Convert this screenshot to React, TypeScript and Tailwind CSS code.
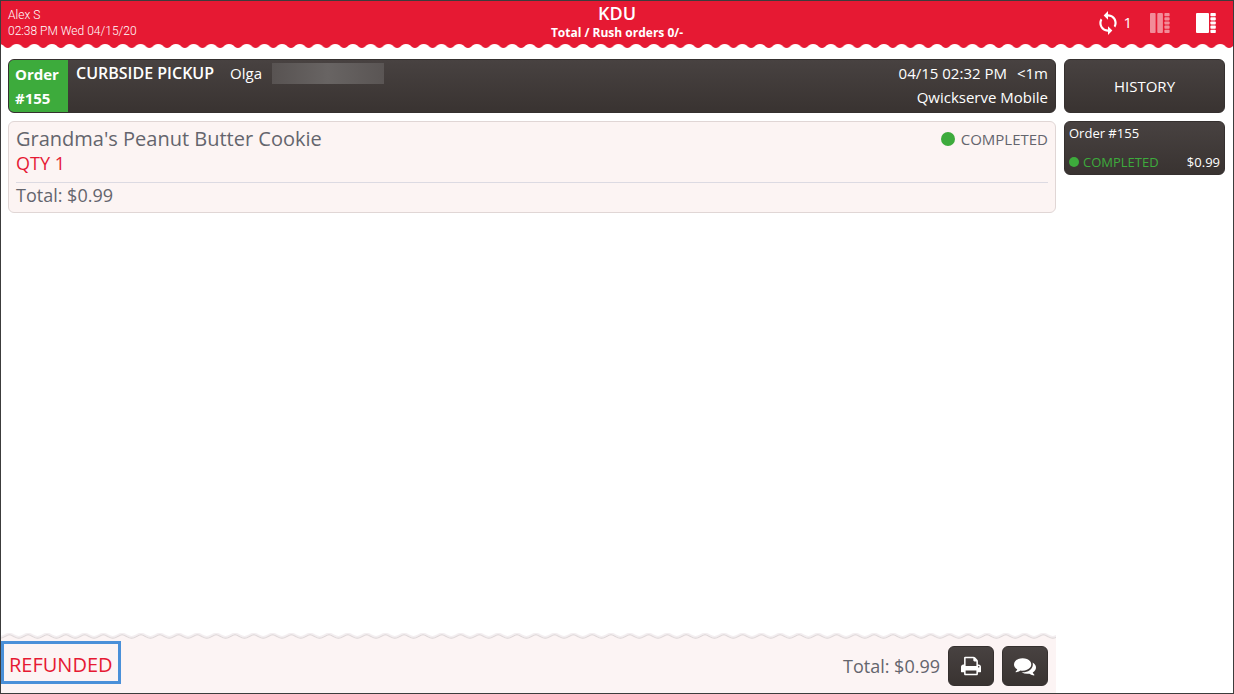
import type { ReactNode } from "react";
import { MdSync } from "react-icons/md";

const items = [{ name: "Grandma's Peanut Butter Cookie", qty: 1, status: "COMPLETED" }];

const history = [{ id: 155, status: "COMPLETED", total: "$0.99" }];

const darkPanel =
  "rounded-md border border-[#35302f] bg-linear-to-b from-[#484241] to-[#393331] text-white";

const ColumnsIcon = () => (
  <svg viewBox="0 0 20 20" className="size-5" fill="currentColor" aria-hidden="true">
    <rect width="5.600" height="20" rx="1" />
    <rect x="7.300" width="5.600" height="20" rx="1" />
    {[0, 4.2, 8.4, 12.6, 16.8].map((y) => (
      <rect key={y} x="14.400" y={y} width="5.200" height="3.200" rx="0.800" />
    ))}
  </svg>
);

const SidebarIcon = () => (
  <svg viewBox="0 0 20 20" className="size-5" fill="currentColor" aria-hidden="true">
    <rect width="13" height="20" rx="1" />
    {[0, 4.2, 8.4, 12.6, 16.8].map((y) => (
      <rect key={y} x="14.400" y={y} width="5.400" height="3.200" rx="0.800" />
    ))}
  </svg>
);

const PrintIcon = () => (
  <svg viewBox="0 0 1664 1792" className="h-[22px] w-5" fill="currentColor" aria-hidden="true">
    <path d="M384 1536h896v-256h-896v256zM384 896h896v-384h-160q-40 0-68-28t-28-68v-160h-640v640zM1536 960q0-26-19-45t-45-19-45 19-19 45 19 45 45 19 45-19 19-45zM1664 960v416q0 13-9.500 22.500t-22.500 9.500h-224v160q0 40-28 68t-68 28h-960q-40 0-68-28t-28-68v-160h-224q-13 0-22.500-9.500t-9.500-22.500v-416q0-79 56.500-135.500t135.500-56.500h64v-544q0-40 28-68t68-28h672q40 0 88 20t76 48l152 152q28 28 48 76t20 88v256h64q79 0 135.500 56.500t56.500 135.500z" />
  </svg>
);

const CommentsIcon = () => (
  <svg viewBox="0 0 1792 1792" className="size-[22px]" fill="currentColor" aria-hidden="true">
    <path d="M1408 768q0 139-94 257t-256.500 186.500-353.500 68.500q-86 0-176-16-124 88-278 128-36 9-86 16h-3q-11 0-20.500-8t-11.500-21q-1-3-1-6.500t0.500-6.500 2-6l2.500-5t3.500-5.500 4-5 4.500-5 4-4.500q5-6 23-25t26-29.500 22.500-29 25-38.500 20.500-44q-124-72-195-177t-71-224q0-139 94-257t256.500-186.500 353.500-68.500 353.500 68.500 256.500 186.500 94 257zM1792 1024q0 120-71 224.500t-195 176.500q10 24 20.500 44t25 38.500 22.500 29 26 29.500 23 25q1 1 4 4.500t4.500 5 4 5 3.500 5.500l2.500 5t2 6 0.500 6.500-1 6.500q-3 14-13 22t-22 7q-50-7-86-16-154-40-278-128-90 16-176 16-271 0-472-132 58 4 88 4 161 0 309-45t264-129q125-92 192-212t67-254q0-77-23-152 129 71 204 178t75 230z" />
  </svg>
);

// Torn paper edge under the header
const HeaderEdge = () => (
  <svg className="block h-1 w-full" aria-hidden="true">
    <defs>
      <pattern id="header-edge" x="6.800" width="17.700" height="4" patternUnits="userSpaceOnUse">
        <path fill="#e61933" d="M0 0H17.700V4C15.500 4 15 3 13 1.300Q8.850 -1.300 4.700 1.300C2.700 3 2.200 4 0 4Z" />
      </pattern>
    </defs>
    <rect width="100%" height="4" fill="url(#header-edge)" />
  </svg>
);

const FooterEdge = () => (
  <svg className="block h-2 w-full" aria-hidden="true">
    <defs>
      <pattern id="footer-edge" x="8.400" width="18.800" height="8" patternUnits="userSpaceOnUse">
        <path fill="#fcf4f4" d="M0 2C2.500 2 6 5.500 9.400 5.500S16.300 2 18.800 2V8H0Z" />
        <path fill="none" stroke="#f3eef0" strokeWidth="2" d="M0 .5C2.500 .5 6 4 9.400 4S16.300 .5 18.800 .5" />
        <path fill="none" stroke="#d9d1d2" strokeWidth="1" d="M0 1.800C2.500 1.800 6 5.300 9.400 5.300S16.300 1.800 18.800 1.800" />
      </pattern>
    </defs>
    <rect width="100%" height="8" fill="url(#footer-edge)" />
  </svg>
);

const ActionButton = ({ label, children }: { label: string; children: ReactNode }) => (
  <button
    type="button"
    aria-label={label}
    className={`flex h-10 w-[46px] items-center justify-center ${darkPanel}`}
  >
    {children}
  </button>
);

const Header = () => (
  <header>
    <div className="grid h-[43px] grid-cols-[1fr_auto_1fr] bg-[#e61933] text-white">
      <div className="pt-1.5 pl-[7px] font-['Roboto',sans-serif] text-xs leading-4 font-light">
        <p>Alex S</p>
        <p>02:38 PM Wed 04/15/20</p>
      </div>
      <div className="text-center">
        <h1 className="text-lg leading-6 font-semibold">KDU</h1>
        <p className="text-xs leading-4 font-bold">Total / Rush orders 0/-</p>
      </div>
      <div className="flex items-center justify-end pr-[17px]">
        <button type="button" aria-label="Sync" className="mr-[18px] flex items-center gap-0.5 text-[15px]">
          <MdSync className="size-[26px]" aria-hidden="true" />
          <span>1</span>
        </button>
        <button type="button" aria-label="Column view" className="mr-[26px] opacity-50">
          <ColumnsIcon />
        </button>
        <button type="button" aria-label="Sidebar view">
          <SidebarIcon />
        </button>
      </div>
    </div>
    <HeaderEdge />
  </header>
);

const OrderBar = () => (
  <div className={`flex h-[54px] overflow-hidden text-[15px] leading-6 ${darkPanel}`}>
    <div className="-my-px -ml-px w-[60px] bg-[#3dab3c] pt-[3px] pl-[7px] font-bold">
      Order
      <br />
      #155
    </div>
    <div className="flex grow justify-between pt-px pr-[7px] pl-2">
      <div className="flex h-6 items-center">
        <span className="text-base font-semibold">CURBSIDE PICKUP</span>
        <span className="ml-4">Olga</span>
        <span className="ml-2.5 h-[21px] w-28 bg-linear-to-r from-[#585352] via-[#686463] to-[#5a5554]" />
      </div>
      <div className="text-right">
        <p>
          04/15 02:32 PM<span className="ml-2.5">&lt;1m</span>
        </p>
        <p>Qwickserve Mobile</p>
      </div>
    </div>
  </div>
);

const App = () => (
  <div className="flex h-screen flex-col overflow-hidden border border-[#3c3c3c] bg-white font-['Open_Sans','Noto_Sans',sans-serif] text-[#64656d]">
    <Header />
    <div className="flex min-h-0 grow gap-2 pr-2">
      <main className="flex grow flex-col">
        <div className="flex grow flex-col gap-2 pt-[11px] pl-[7px]">
          <OrderBar />
          {items.map((item) => (
            <section key={item.name} className="rounded-md border border-[#e0d6d5] bg-[#fcf4f3] px-[7px] py-[5px]">
              <div className="flex items-center justify-between">
                <h2 className="text-xl leading-6">{item.name}</h2>
                <p className="flex items-center gap-1.5 text-[15px] leading-6">
                  <span className="size-3.5 rounded-full bg-[#3dab3c]" />
                  {item.status}
                </p>
              </div>
              <p className="text-lg leading-6 text-[#e61933]">QTY {item.qty}</p>
              <p className="mt-[7px] border-t border-[#dcdae2] text-lg leading-6">Total: $0.99</p>
            </section>
          ))}
        </div>
        <footer>
          <FooterEdge />
          <div className="flex h-[52px] items-start justify-between bg-[#fcf4f4] pr-2">
            <div className="flex h-[43px] items-center border-3 border-[#4a90d9] px-[5px] pt-1 text-xl text-[#e61933]">
              REFUNDED
            </div>
            <div className="flex items-center gap-2 pt-[5px]">
              <span className="text-lg">Total: $0.99</span>
              <ActionButton label="Print">
                <PrintIcon />
              </ActionButton>
              <ActionButton label="Messages">
                <CommentsIcon />
              </ActionButton>
            </div>
          </div>
        </footer>
      </main>
      <aside className="flex w-[161px] shrink-0 flex-col gap-2 pt-[11px]">
        <button type="button" className={`h-[54px] text-[15px] ${darkPanel}`}>
          HISTORY
        </button>
        {history.map((order) => (
          <button
            key={order.id}
            type="button"
            className={`flex h-[54px] flex-col justify-between px-1 pt-px pb-0.5 text-left text-[13px] leading-5 ${darkPanel}`}
          >
            <span>Order #{order.id}</span>
            <span className="flex w-full items-center">
              <span className="mr-1 size-2.5 rounded-full bg-[#3dab3c]" />
              <span className="text-[#3dab3c]">{order.status}</span>
              <span className="ml-auto">{order.total}</span>
            </span>
          </button>
        ))}
      </aside>
    </div>
  </div>
);

export default App;
